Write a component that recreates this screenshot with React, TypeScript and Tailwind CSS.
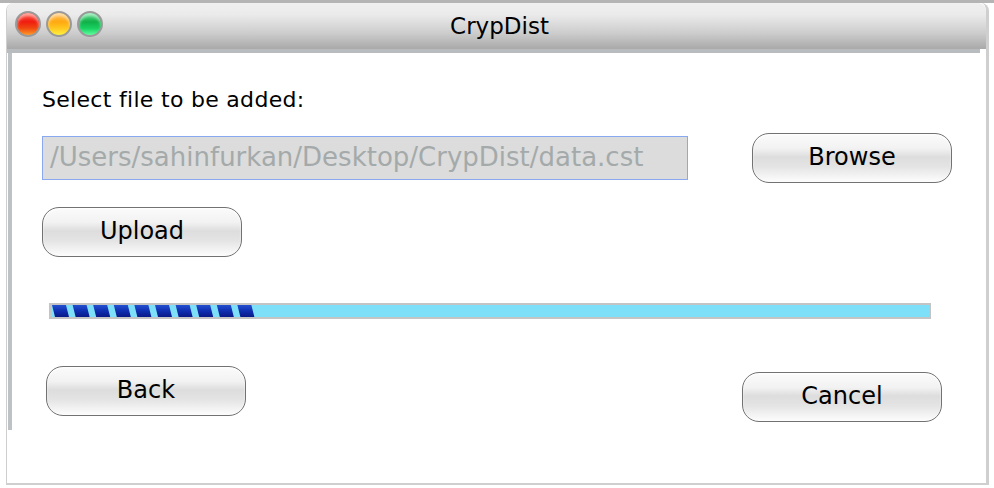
import React from "react";

const font = { fontFamily: '"DejaVu Sans", "Liberation Sans", sans-serif' };

function AquaButton({ label, className }: { label: string; className?: string }) {
  return (
    <div
      className={
        "flex h-[50px] w-[200px] items-center justify-center rounded-[17px] border-[1.5px] border-[#727272] text-[24px] text-black shadow-[inset_0_1px_2px_rgba(255,255,255,0.9)] bg-[linear-gradient(to_bottom,#fbfbfb_0%,#f2f2f2_30%,#dddddd_48%,#e4e4e4_68%,#fdfdfd_100%)] " +
        (className ?? "")
      }
    >
      <span className="-mt-[3px] leading-[28px]">{label}</span>
    </div>
  );
}

function Stripes() {
  const items = Array.from({ length: 10 }, (_, i) => i);
  return (
    <svg width="220" height="12" viewBox="0 0 220 12" className="block">
      <defs>
        <linearGradient id="sg" x1="0" y1="0" x2="0" y2="1">
          <stop offset="0" stopColor="#2350d0" />
          <stop offset="0.5" stopColor="#0f2eb0" />
          <stop offset="1" stopColor="#081888" />
        </linearGradient>
      </defs>
      {items.map((i) => {
        const x = 1 + i * 20.6;
        return (
          <polygon
            key={i}
            points={`${x},0 ${x + 14},0 ${x + 17},12 ${x + 3},12`}
            fill="url(#sg)"
          />
        );
      })}
    </svg>
  );
}

export default function App() {
  return (
    <div className="h-[488px] w-[994px] overflow-hidden bg-white" style={font}>
      <div className="h-[3px] w-full bg-[#b4b4b4]" />
      <div className="ml-[6px] flex h-[482px] w-[983px] flex-col rounded-t-[8px] border-b-[2px] border-l border-r-[3px] border-[#cfcfcf]">
        {/* title bar */}
        <div className="relative flex h-[46px] items-center justify-center rounded-t-[8px] bg-[linear-gradient(to_bottom,#efefef_0%,#ebebeb_25%,#cdcdcd_65%,#a9a9a9_100%)]">
          <div className="absolute left-[8px] top-[8px] flex gap-[5px]">
            <div className="h-[26px] w-[26px] rounded-full border-2 border-[#9a9a9a] bg-[linear-gradient(to_bottom,#ff5a4a_0%,#f01c10_40%,#f04a10_70%,#ff9a2a_100%)] shadow-[inset_0_3px_3px_rgba(255,255,255,0.5)]" />
            <div className="h-[26px] w-[26px] rounded-full border-2 border-[#9a9a9a] bg-[linear-gradient(to_bottom,#ffc060_0%,#ffa810_40%,#ffc820_70%,#fff040_100%)] shadow-[inset_0_3px_3px_rgba(255,255,255,0.5)]" />
            <div className="h-[26px] w-[26px] rounded-full border-2 border-[#9a9a9a] bg-[linear-gradient(to_bottom,#60e090_0%,#10b048_40%,#18d060_70%,#60ffa0_100%)] shadow-[inset_0_3px_3px_rgba(255,255,255,0.5)]" />
          </div>
          <span className="ml-[6px] text-[23px] text-black">CrypDist</span>
        </div>
        <div className="mr-[6px] h-[4px] bg-[#b9bcbf]" />
        {/* content */}
        <div className="ml-[1px] flex h-[377px] flex-col border-l-[4px] border-[#bfc2c4] pl-[30px] pt-[34px]">
          <div className="text-[22px] leading-[26px] tracking-[0.3px] text-black">Select file to be added:</div>
          <div className="mt-[20px] flex items-center">
            <div className="flex h-[44px] w-[646px] items-center border border-[#8aa8f0] bg-[#dcdcdc] pl-[7px] text-[26px] text-[#a4aaaa]">
              <span className="-mt-[2px]">/Users/sahinfurkan/Desktop/CrypDist/data.cst</span>
            </div>
            <AquaButton label="Browse" className="ml-[64px]" />
          </div>
          <AquaButton label="Upload" className="mt-[24px]" />
          <div className="ml-[7px] mt-[46px] h-[16px] w-[882px] border-2 border-[#c4c4c4] bg-[#7ee0f8]">
            <Stripes />
          </div>
          <div className="mt-[47px] flex w-[900px] items-start">
            <AquaButton label="Back" className="ml-[4px]" />
            <AquaButton label="Cancel" className="ml-[496px] mt-[6px]" />
          </div>
        </div>
      </div>
    </div>
  );
}
